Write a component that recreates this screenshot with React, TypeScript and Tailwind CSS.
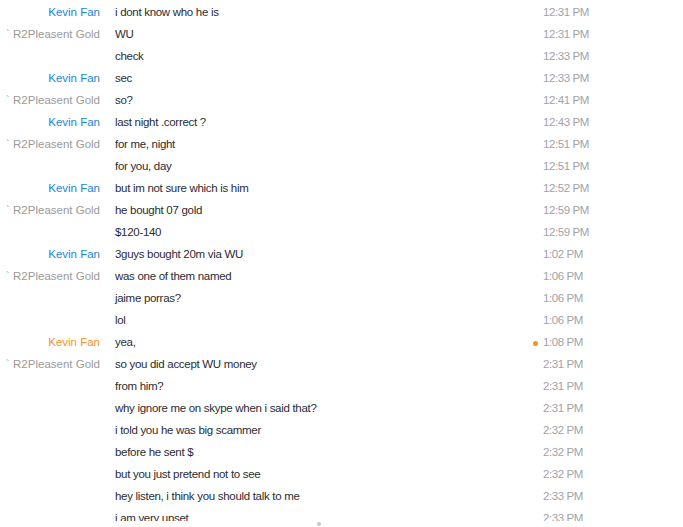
import React from 'react';

type Msg = { name?: string; who?: 'k' | 'r' | 'ko'; text: string; time: string; dot?: boolean };

const messages: Msg[] = [
    { name: 'Kevin Fan', who: 'k', text: 'i dont know who he is', time: '12:31 PM' },
    { name: '` R2Pleasent Gold', who: 'r', text: 'WU', time: '12:31 PM' },
    { text: 'check', time: '12:33 PM' },
    { name: 'Kevin Fan', who: 'k', text: 'sec', time: '12:33 PM' },
    { name: '` R2Pleasent Gold', who: 'r', text: 'so?', time: '12:41 PM' },
    { name: 'Kevin Fan', who: 'k', text: 'last night .correct ?', time: '12:43 PM' },
    { name: '` R2Pleasent Gold', who: 'r', text: 'for me, night', time: '12:51 PM' },
    { text: 'for you, day', time: '12:51 PM' },
    { name: 'Kevin Fan', who: 'k', text: 'but im not sure which is him', time: '12:52 PM' },
    { name: '` R2Pleasent Gold', who: 'r', text: 'he bought 07 gold', time: '12:59 PM' },
    { text: '$120-140', time: '12:59 PM' },
    { name: 'Kevin Fan', who: 'k', text: '3guys bought 20m via WU', time: '1:02 PM' },
    { name: '` R2Pleasent Gold', who: 'r', text: 'was one of them named', time: '1:06 PM' },
    { text: 'jaime porras?', time: '1:06 PM' },
    { text: 'lol', time: '1:06 PM' },
    { name: 'Kevin Fan', who: 'ko', text: 'yea,', time: '1:08 PM', dot: true },
    { name: '` R2Pleasent Gold', who: 'r', text: 'so you did accept WU money', time: '2:31 PM' },
    { text: 'from him?', time: '2:31 PM' },
    { text: 'why ignore me on skype when i said that?', time: '2:31 PM' },
    { text: 'i told you he was big scammer', time: '2:32 PM' },
    { text: 'before he sent $', time: '2:32 PM' },
    { text: 'but you just pretend not to see', time: '2:32 PM' },
    { text: 'hey listen, i think you should talk to me', time: '2:33 PM' },
    { text: 'i am very upset', time: '2:33 PM' },
];

const nameColor = {
    k: 'text-[#1c84d6]',
    ko: 'text-[#f7921e]',
    r: 'text-[#9a9a9a]',
};

export default function App() {
    return (
        <div className="w-[683px] h-[527px] bg-white flex flex-col font-['Liberation_Sans',sans-serif] text-[11.5px]">
            {/* chat history */}
            <div className="h-[521px] overflow-hidden pt-[2px]">
                {messages.map((m, i) => (
                    <div key={i} className="flex items-center h-[22px]">
                        <div className={`w-[100px] shrink-0 text-right ${m.who ? nameColor[m.who] : ''}`}>
                            {m.name}
                        </div>
                        <div className="w-[415px] shrink-0 pl-[15px] text-[#2b2b33] whitespace-nowrap tracking-[-0.3px]">{m.text}</div>
                        <div className="w-[28px] shrink-0 flex justify-center">
                            {m.dot && <span className="w-[5px] h-[5px] rounded-full bg-[#f7921e] ml-[12px]" />}
                        </div>
                        <div className="text-[#a2a2ab] tracking-[-0.4px]">{m.time}</div>
                    </div>
                ))}
            </div>
            {/* resize grip */}
            <div className="flex-1 flex items-start pl-[317px]">
                <span className="w-[4px] h-[4px] rounded-full bg-[#c4c8d2] mt-px" />
            </div>
        </div>
    );
}
